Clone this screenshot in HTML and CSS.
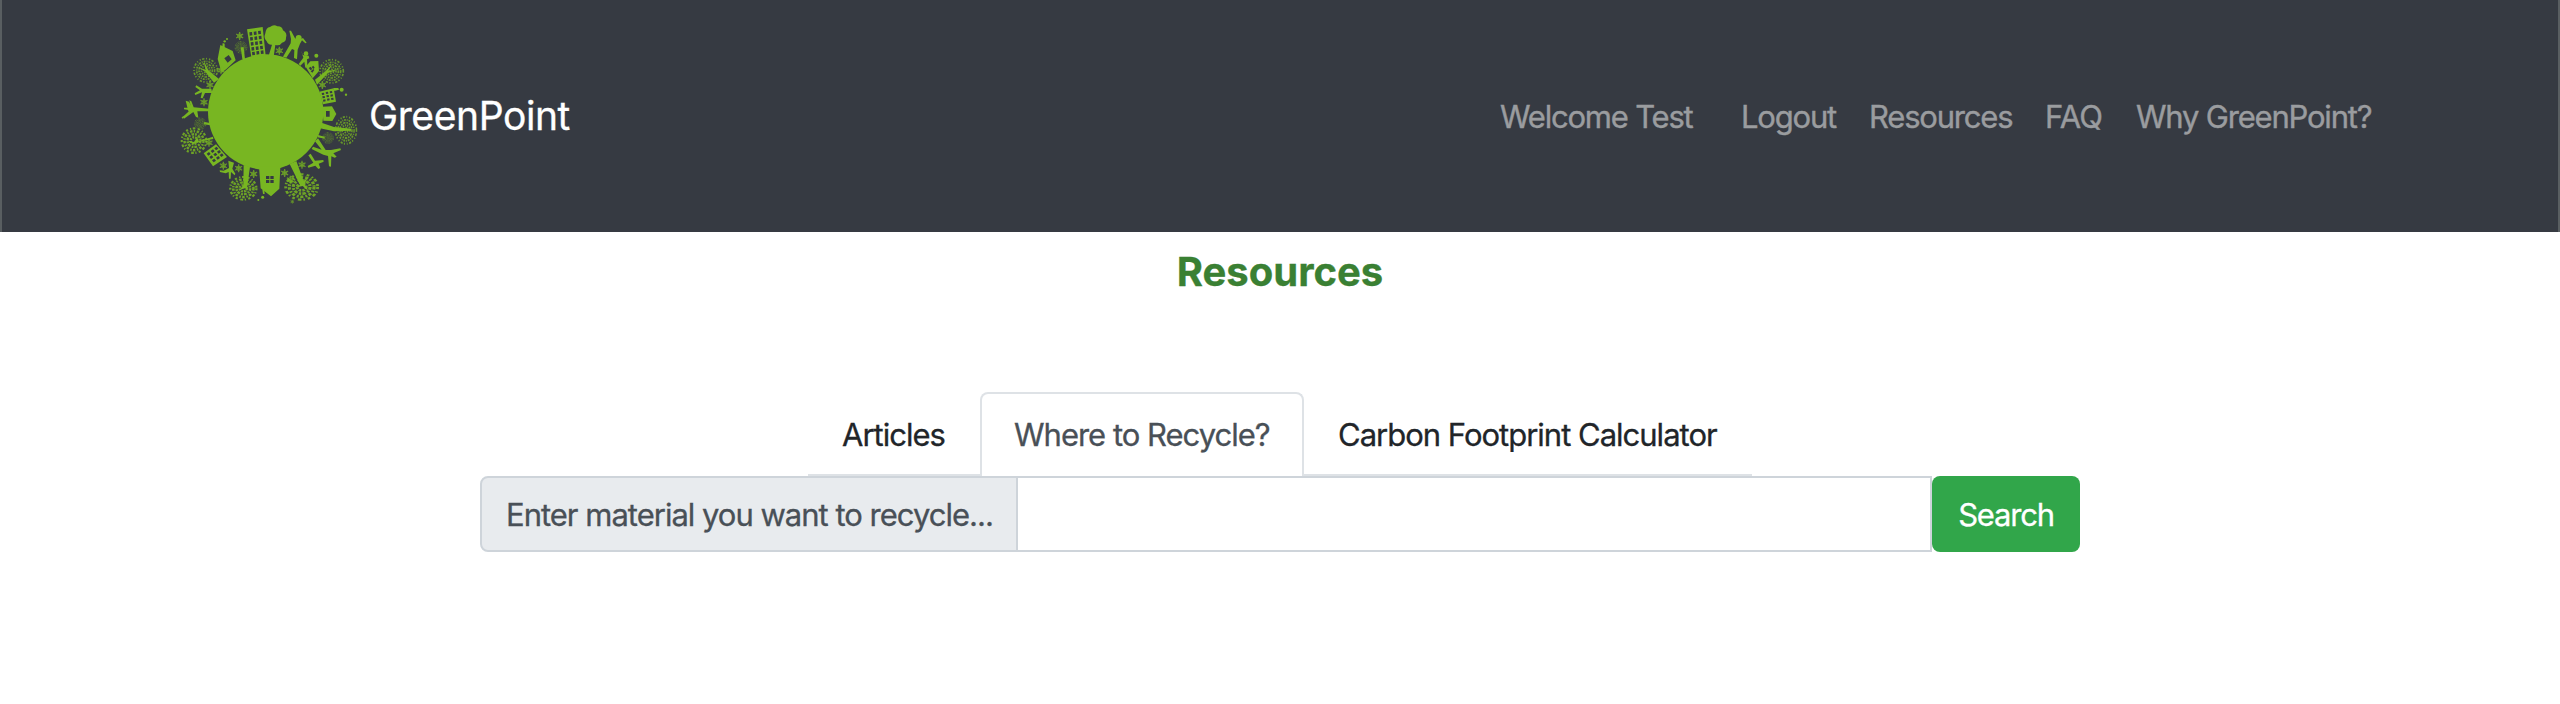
FILE: index.html
```
<!DOCTYPE html>
<html lang="en">
<head>
<meta charset="utf-8">
<title>GreenPoint - Resources</title>
<link rel="stylesheet" href="styles.css">
</head>
<body>
<header class="navbar">
  <a class="brand">
    <svg class="logo" viewBox="48 30 555 555" aria-hidden="true">
      <defs>
        <g id="flower" stroke="#78b622" stroke-width="3.6" fill="none" opacity=".8">
          <path d="M0-12V12M-10.5-6L10.5 6M-10.5 6L10.5-6"/>
          <circle r="6.500" stroke-width="2.500"/>
        </g>
        <g id="crown" fill="none" stroke="#78b622" stroke-width="5" opacity=".75">
          <circle r="35" stroke-dasharray="4 4 7 5 3 6" stroke-width="5"/>
          <circle r="27" stroke-dasharray="6 3 3 3"/>
          <circle r="20" stroke-dasharray="5 3 8 3"/>
          <circle r="13" stroke-dasharray="4 3"/>
          <circle r="6" stroke-dasharray="5 3"/>
        </g>
        <g id="leafy" fill="none" stroke="#78b622" opacity=".85">
          <circle r="40" stroke-width="7" stroke-dasharray="7 7 4 5 9 8"/>
          <circle r="31" stroke-width="8" stroke-dasharray="8 4 5 5"/>
          <circle r="21" stroke-width="8" stroke-dasharray="9 3 6 4"/>
          <circle r="11" stroke-width="8" stroke-dasharray="6 3"/>
        </g>
      </defs>
      <g fill="#78b622">
        <circle cx="317" cy="306" r="173"/>
        <!-- top: office block, round tree, people -->
        <path fill-rule="evenodd" d="M261 58l47-7 9 86-43 5zM268 67l1 10 8-1-1-10zM281 65l1 10 8-1-1-10zM294 63l1 10 8-1-1-10zM270 82l1 10 8-1-1-10zM283 80l1 10 8-1-1-10zM296 78l1 10 8-1-1-10zM272 97l1 10 8-1-1-10zM285 95l1 10 8-1-1-10zM298 93l1 10 8-1-1-10zM274 112l1 10 8-1-1-10zM287 110l1 10 8-1-1-10zM300 108l1 10 8-1-1-10zM276 126l1 10 8-1-1-10zM289 124l1 10 8-1-1-10zM302 122l1 10 8-1-1-10z"/>
        <path d="M316 70q2-18 14-19 11-9 22-2 14-1 17 12 14 9 9 22 1 12-12 15-7 11-20 7l-5 35h-16l11-36q-12 1-16-10-10-10-4-24z"/>
        <circle cx="416" cy="84" r="9"/>
        <path d="M388 62l5 0 12 23 13 4 11-5 11 14-4 2-10-9-6 10-7 18-2 29-9-4 1-24-7-3-17 26-10-3 23-40 1-13z"/>
        <circle cx="438" cy="131" r="7"/>
        <path d="M423 121l5 13 10 4 8-1 2 8-7 3 1 18-6 8-3-19-12 12-5-5 14-19z"/>
        <path fill-rule="evenodd" d="M437 170l14-16 24-1 2 30-19 22zM446 174l6 7 5-4-5-7zM455 171l5 6 4-4-4-6zM452 184l5 4 6-8-3-3z"/>
        <!-- upper left house -->
        <path fill-rule="evenodd" d="M173 147l8-42 37 18 9 28-27 25-15 12zM193 145l13-10 9 13-12 10z"/>
        <path d="M187 112l1-13 6 2 0 14z"/>
        <circle cx="194" cy="94" r="3.500"/><circle cx="201" cy="87" r="3"/>
        <!-- right houses and block -->
        <path fill-rule="evenodd" d="M487 290l29-1 13 23-12 21-27-1zM498 303v17h11v-17z"/>
        <path fill-rule="evenodd" d="M478 245l43-10 7 40-39 8zM485 249l1 6 7-1-1-6zM497 246l1 6 7-1-1-6zM509 244l1 6 7-1-1-6zM487 259l1 6 7-1-1-6zM499 256l1 6 7-1-1-6zM511 254l1 6 7-1-1-6zM489 269l1 6 7-1-1-6zM501 266l1 6 7-1-1-6zM513 264l1 6 7-1-1-6z"/>
        <path d="M520 234l15 0 2 5-14 4z"/>
        <circle cx="545" cy="239" r="6"/><circle cx="558" cy="254" r="3.500"/><circle cx="469" cy="137" r="6"/>
        <!-- lower left block -->
        <path fill-rule="evenodd" d="M131 430l37-27 33 38-42 28zM140 431l5 6 7-5-5-6zM152 423l5 6 7-5-5-6zM163 415l5 6 7-5-5-6zM148 441l5 6 7-5-5-6zM160 433l5 6 7-5-5-6zM171 425l5 6 7-5-5-6zM156 451l5 6 7-5-5-6zM168 443l5 6 7-5-5-6zM179 435l5 6 7-5-5-6z"/>
        <!-- bottom house -->
        <path fill-rule="evenodd" d="M297 470h64l-3 66-25 23-31-24zM318 498v9h10v-9zM331 498v9h10v-9zM318 510v9h10v-9zM331 510v9h10v-9z"/>
        <path d="M307 538l6 2 1 12-5 0z"/>
        <circle cx="308" cy="562" r="4.500"/><circle cx="295" cy="570" r="3"/>
        <!-- tree trunks -->
        <path d="M162 218l-27-34-22-12 24 8-5-26 13 27 32 26zM465 209l30-24 22-23-12 21 34-6-35 12-33 35zM480 337l42 14 52 5 0 6-52 2-42-9zM160 387l-36 7-24 8-20-11 22 5 10-16 3 14 44-14zM251 465l-1 60-11 15 18-6 1 14 4-20 8-58zM389 462l31 63-16 8 24-5 17 14-11-20 10-22-13 14-22-61zM242 112l5 35 8 0-4-35zM133 336l18 3 0 7-20-3zM474 375l20 5 0 6-21-4z"/>
        <!-- left figures -->
        <path d="M148 296l-47-4-7-18-6-3 5 22-21 0 0 5 18 3-22 20 4 5 28-20 8 15 7 2-3-19 38 0zM154 236l-28 0-17-10-3 5 14 10-16 9 2 5 20-8-4 17 6 1 7-16 22 0z"/>
        <path d="M77 272l10 3 11 21-5 12-8-4zM65 322l7-5-5 10z"/>
        <!-- lower figures -->
        <path d="M205 452l2 22-16 8-12-1 1 5 17 4 9-4 1 20 5 0 1-20 11 10 2-5-9-15 5-18z"/>
        <path d="M474 385l23 35 16 0 28-5 2 5-23 10 10 10-6 3-10-4-1 31-6-1-3-31-14-4-35-17 4-7 26 9-20-25z"/>
        <path d="M452 431l13 21 25-2 1 5-15 6 5 13-6 3-9-10-21 6-2-5 17-10-15-22z"/>
      </g>
      <use href="#crown" transform="translate(137 181)"/>
      <use href="#crown" transform="translate(515 184)"/>
      <use href="#crown" transform="translate(558 361) scale(.9 1.160)"/>
      <use href="#crown" transform="translate(243 112) scale(.5)"/>
      <use href="#crown" transform="translate(121 341) scale(.48)"/>
      <use href="#crown" transform="translate(504 384) scale(.46)"/>
      <use href="#leafy" transform="translate(102 392) scale(.92)"/>
      <use href="#leafy" transform="translate(250 535) scale(.98 .85)"/>
      <use href="#leafy" transform="translate(425 531) scale(1.200 .95)"/>
      <use href="#flower" x="239" y="78"/>
      <use href="#flower" x="358" y="122"/>
      <use href="#flower" x="183" y="181"/>
      <use href="#flower" x="150" y="225"/>
      <use href="#flower" x="132" y="277"/>
      <use href="#flower" x="147" y="398"/>
      <use href="#flower" x="190" y="467"/>
      <use href="#flower" x="236" y="475"/>
      <use href="#flower" x="281" y="492"/>
      <use href="#flower" x="374" y="489"/>
      <use href="#flower" x="391" y="509"/>
      <use href="#flower" x="426" y="464"/>
      <use href="#flower" x="487" y="225"/>
      <use href="#flower" transform="translate(397 575) scale(.5)"/>
    </svg>
    <span class="brand-name">GreenPoint</span>
  </a>
  <nav class="nav-links">
    <span class="nav-welcome">Welcome Test</span>
    <a class="nav-logout">Logout</a>
    <a class="nav-resources">Resources</a>
    <a class="nav-faq">FAQ</a>
    <a class="nav-why">Why GreenPoint?</a>
  </nav>
</header>
<main class="content">
  <h1 class="title">Resources</h1>
  <div class="tabs">
    <a class="tab tab-articles">Articles</a>
    <a class="tab tab-recycle active">Where to Recycle?</a>
    <a class="tab tab-carbon">Carbon Footprint Calculator</a>
  </div>
  <form class="search">
    <label class="search-label" for="material">Enter material you want to recycle...</label>
    <input class="search-input" id="material" type="text">
    <button class="search-button" type="button">Search</button>
  </form>
</main>
</body>
</html>
```
FILE: styles.css
```
* { box-sizing: border-box; }
body {
  margin: 0;
  background: #fff;
  color: #212529;
  font: 400 31px/48px Inter, "Liberation Sans", sans-serif;
  letter-spacing: -1px;
}
.navbar {
  display: flex;
  align-items: center;
  justify-content: space-between;
  height: 232px;
  padding: 0 182px 0 174px;
  background: #363a42;
  border: solid #595e61;
  border-width: 0 2px;
}
.brand { display: flex; align-items: center; color: #fff; }
.logo { width: 185px; height: 185px; margin-top: -7px; }
.brand-name {
  margin-left: 8px;
  font-size: 39px;
  line-height: 60px;
  letter-spacing: -0.4px;
  -webkit-text-stroke: 0.3px currentColor;
}
.nav-links {
  display: flex;
  padding-top: 2px;
  color: #9a9c9f;
  white-space: nowrap;
  letter-spacing: -1.2px;
  -webkit-text-stroke: 0.4px currentColor;
}
.nav-welcome { width: 241px; }
.nav-logout { width: 128px; }
.nav-resources { width: 176px; }
.nav-faq { width: 91px; letter-spacing: -0.8px; }
.nav-why { width: 240px; }
.content {
  display: flex;
  flex-direction: column;
  align-items: center;
  -webkit-text-stroke: 0.3px currentColor;
}
.title {
  margin: 16px 0 0;
  height: 144px;
  color: #3a8033;
  font-size: 40px;
  line-height: 48px;
  font-weight: 700;
  letter-spacing: 0;
}
.tabs { display: flex; width: 944px; height: 84px; border-bottom: 2px solid #dee2e6; }
.tab {
  height: 84px;
  padding: 16px 32px;
  border: 2px solid transparent;
  border-bottom: 0;
  border-radius: 8px 8px 0 0;
  line-height: 50px;
  white-space: nowrap;
}
.tab-articles { width: 172px; }
.tab-recycle { width: 324px; }
.tab-carbon { width: 448px; }
.tab.active { background: #fff; color: #495057; border-color: #dee2e6; }
.search { display: flex; width: 1600px; height: 76px; }
.search-label {
  width: 538px;
  padding: 13px 24px 11px;
  background: #e8ebee;
  color: #495057;
  border: 2px solid #ced4da;
  border-radius: 8px 0 0 8px;
  white-space: nowrap;
}
.search-input {
  flex: 1;
  min-width: 0;
  margin-left: -2px;
  border: 2px solid #ced4da;
  border-radius: 0;
  background: #fff;
  font: inherit;
}
.search-button {
  width: 148px;
  padding: 2px 0 0;
  border: 0;
  border-radius: 8px;
  background: #31a64a;
  color: #fff;
  font: inherit;
  letter-spacing: -1.2px;
}
```
